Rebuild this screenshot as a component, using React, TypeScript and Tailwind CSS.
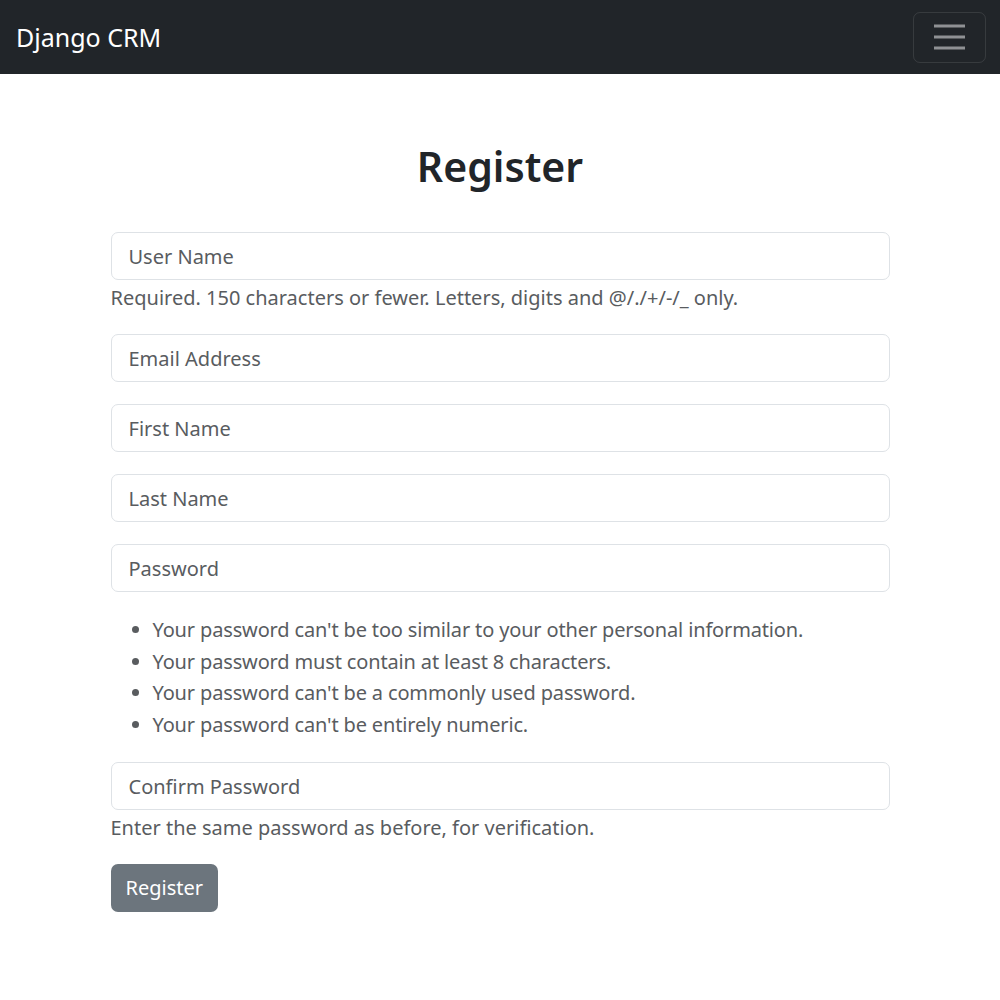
export default function App() {
  const font = { fontFamily: '"Noto Sans", "Open Sans", sans-serif' }
  return (
    <div className="min-h-[1000px] bg-white" style={font}>
      <nav className="h-[74px] bg-[#212529] flex items-center justify-between pl-4 pr-[14px]">
        <span className="text-white text-[25px] leading-none">Django CRM</span>
        <button className="w-[73px] h-[51px] rounded-[7px] border border-white/10 flex items-center justify-center">
          <svg width="33" height="26" viewBox="0 0 33 26">
            <path d="M1 2h31M1 13h31M1 24h31" stroke="#8f9194" strokeWidth="3" />
          </svg>
        </button>
      </nav>

      <div className="w-[779px] mx-auto pt-[62px]">
        <h1 className="text-center text-[41px] font-semibold text-[#212529] leading-[60px] mb-[36px]">
          Register
        </h1>
        <form className="text-[20px] text-[#595c5f]">
          <Field placeholder="User Name" />
          <p className="mt-[6px] leading-[24px] mb-[24px]">
            Required. 150 characters or fewer. Letters, digits and @/./+/-/_ only.
          </p>
          <Field placeholder="Email Address" />
          <div className="h-[22px]" />
          <Field placeholder="First Name" />
          <div className="h-[22px]" />
          <Field placeholder="Last Name" />
          <div className="h-[22px]" />
          <Field placeholder="Password" />
          <ul className="list-disc pl-[42px] mt-[22px] mb-[22px] leading-[31.5px] tracking-[-0.15px]">
            <li>Your password can't be too similar to your other personal information.</li>
            <li>Your password must contain at least 8 characters.</li>
            <li>Your password can't be a commonly used password.</li>
            <li>Your password can't be entirely numeric.</li>
          </ul>
          <Field placeholder="Confirm Password" />
          <p className="mt-[6px] leading-[24px] mb-[24px]">
            Enter the same password as before, for verification.
          </p>
          <button
            type="button"
            className="h-[48px] px-[15px] rounded-[7px] bg-[#6c757d] text-white text-[20px]"
          >
            Register
          </button>
        </form>
      </div>
    </div>
  )
}

function Field({ placeholder }: { placeholder: string }) {
  return (
    <input
      placeholder={placeholder}
      className="block w-full h-[48px] px-[17px] rounded-[7px] border border-[#dee2e6] text-[20px] text-[#212529] placeholder:text-[#595c5f] outline-none"
    />
  )
}
